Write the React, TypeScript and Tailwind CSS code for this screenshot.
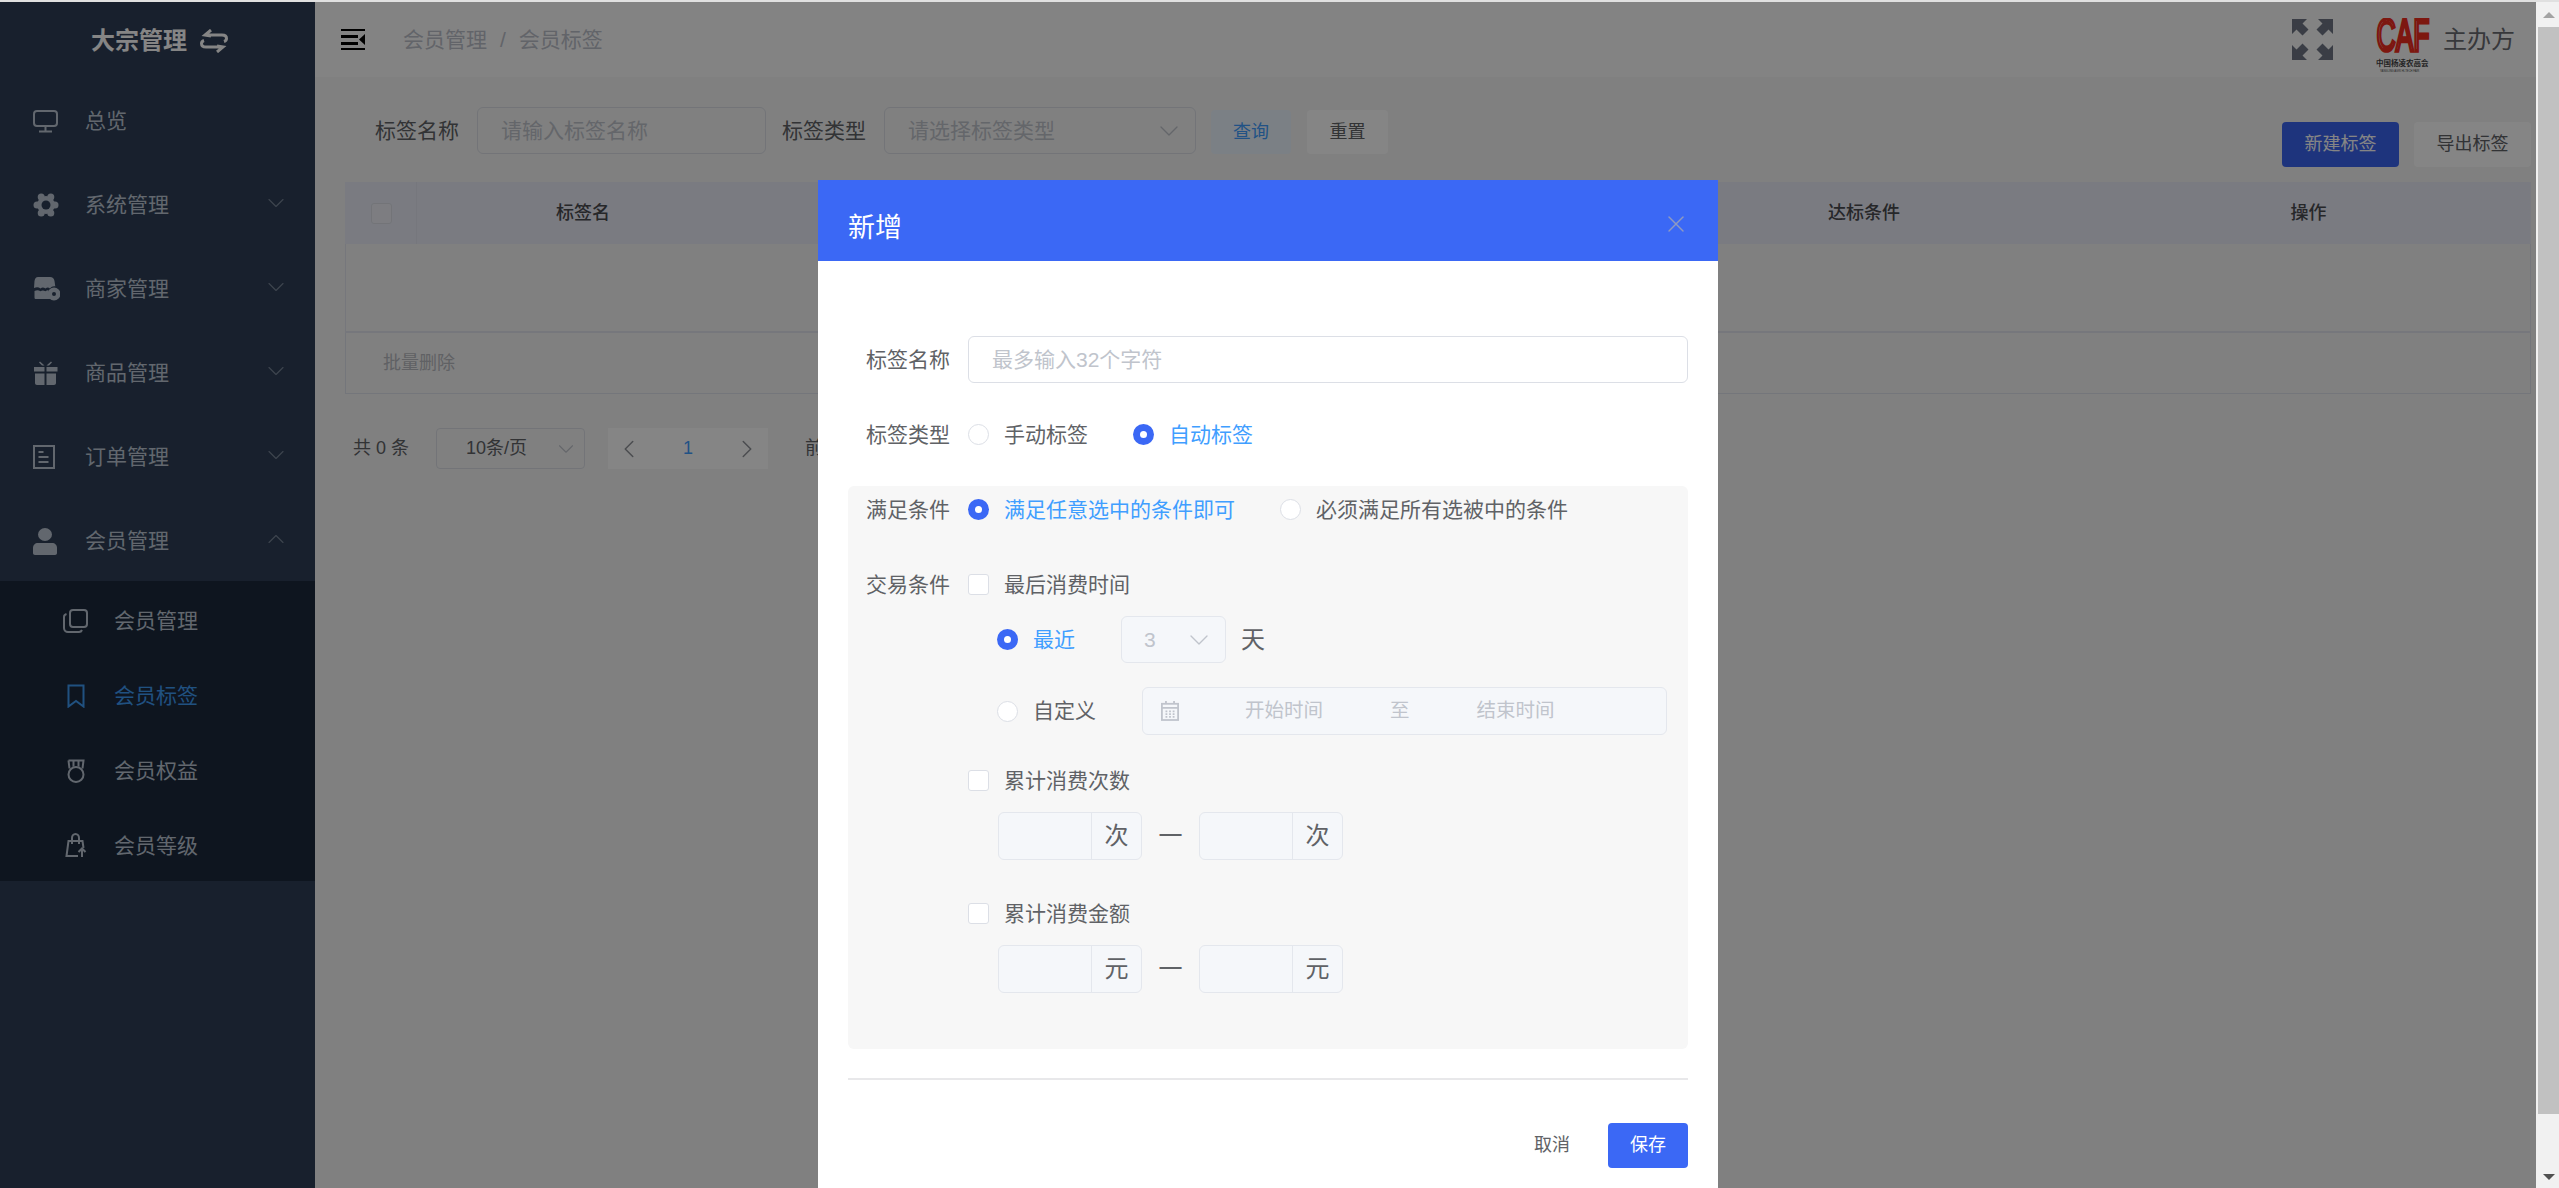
import { ReactNode } from 'react'
import { ChevronDown, ChevronUp, ChevronLeft, ChevronRight, X } from 'lucide-react'

const SIDEBAR_BG = '#2e3e56'

const MonitorIcon = () => (
  <svg width="25" height="24" viewBox="0 0 25 24" fill="none" stroke="currentColor" strokeWidth="2">
    <rect x="1" y="2" width="23" height="15" rx="3" />
    <path d="M12.500 17v5M6 22.500h13" />
  </svg>
)

const GearIcon = () => (
  <svg width="26" height="24" viewBox="0 0 26 24" fill="currentColor">
    <circle cx="13" cy="12" r="9" />
    <circle cx="22" cy="12" r="3.500" />
    <circle cx="4" cy="12" r="3.500" />
    <circle cx="17.800" cy="4" r="3.500" />
    <circle cx="8.200" cy="4" r="3.500" />
    <circle cx="17.800" cy="20" r="3.500" />
    <circle cx="8.200" cy="20" r="3.500" />
    <circle cx="13" cy="12" r="4.500" fill={SIDEBAR_BG} />
  </svg>
)

const ShopIcon = () => (
  <svg width="27" height="24" viewBox="0 0 27 24" fill="currentColor">
    <path d="M5 0h12c2.500 0 4 1.500 4.500 4l.8 5.500c-2-.5-3.800.2-5.300 2-1.500-1.500-3-1.500-4.500 0-2-1.500-3.500-1.500-5 0-2-1.500-4-1.500-6.500-.5L1.500 4C2 1.500 3 0 5 0z" />
    <path d="M1.500 14c2-1 4-1 6 .2 1.500-1 3-1 5 0 1-.8 2-1 3-.8-.7 3 .2 6.600 2 8.600H3c-1 0-1.500-.5-1.500-1.500z" />
    <path fillRule="evenodd" d="M21 10.500a6.500 6.500 0 1 1 0 13 6.500 6.500 0 0 1 0-13zm0 4.500a2 2 0 1 0 0 4 2 2 0 0 0 0-4z" />
  </svg>
)

const GiftIcon = () => (
  <svg width="25" height="24" viewBox="0 0 25 24" fill="currentColor">
    <path d="M1 6h10.500v4.500H1zM13.500 6H24.500v4.500H13.500zM2 12.500h9.500V24H4c-1.200 0-2-.8-2-2zM13.500 12.500H23V22c0 1.200-.8 2-2 2h-7.500z" />
    <path d="M7 .5l4.500 4h-2.500L6 1.500zM18 .5l-4.500 4H16l3-3z" />
  </svg>
)

const DocIcon = () => (
  <svg width="22" height="24" viewBox="0 0 22 24" fill="none" stroke="currentColor" strokeWidth="2">
    <rect x="1" y="1" width="20" height="22" />
    <path d="M5.500 7h5M5.500 12h10M5.500 17h10" />
  </svg>
)

const UserIcon = () => (
  <svg width="24" height="27" viewBox="0 0 24 27" fill="currentColor">
    <ellipse cx="12" cy="6.500" rx="7" ry="6.500" />
    <path d="M5 15h14c3 0 5 2 5 5v5c0 1-.8 2-2 2H2c-1.200 0-2-1-2-2v-5c0-3 2-5 5-5z" />
  </svg>
)

const CopyIcon = () => (
  <svg width="25" height="24" viewBox="0 0 25 24" fill="none" stroke="currentColor" strokeWidth="2">
    <rect x="7" y="1" width="17" height="17" rx="3" />
    <path d="M3.500 5C2 5.500 1 6.500 1 8v11c0 2.500 2 4 4 4h11c1.500 0 2.500-.8 3-2" />
  </svg>
)

const BookmarkIcon = () => (
  <svg width="18" height="24" viewBox="0 0 18 24" fill="none" stroke="currentColor" strokeWidth="2">
    <path d="M1.500 1.500h15v21L9 17l-7.500 5.500z" />
  </svg>
)

const MedalIcon = () => (
  <svg width="18" height="24" viewBox="0 0 18 24" fill="none" stroke="currentColor" strokeWidth="2">
    <path d="M1.500 1.500h15l-1 8M1.500 1.500l1 8M6.500 1.500v6M11.500 1.500v6" />
    <circle cx="9" cy="15.500" r="7.500" />
  </svg>
)

const BagIcon = () => (
  <svg width="22" height="25" viewBox="0 0 22 25" fill="none" stroke="currentColor" strokeWidth="2">
    <path d="M13 23H1.500L3.500 8h14l1 7" />
    <path d="M7 11V5c0-2.200 1.500-4 3.500-4S14 2.800 14 5v6" />
    <path d="M17 24v-8M13.500 19l3.500-3.500 3.500 3.500" />
  </svg>
)

const FullscreenIcon = () => (
  <svg width="41" height="41" viewBox="0 0 41 41" fill="currentColor">
    <path d="M0 0h15l-4.500 4.500 6 6-6 6-6-6L0 15z" />
    <path d="M41 0H26l4.500 4.500-6 6 6 6 6-6L41 15z" />
    <path d="M0 41h15l-4.500-4.500 6-6-6-6-6 6L0 26z" />
    <path d="M41 41H26l4.500-4.500-6-6 6-6 6 6L41 26z" />
  </svg>
)

const Radio = ({ checked, label }: { checked?: boolean; label: string }) => (
  <span className="flex items-center">
    {checked ? (
      <span className="flex h-[21px] w-[21px] items-center justify-center rounded-full bg-[#3b68f5]">
        <span className="h-[7px] w-[7px] rounded-full bg-white" />
      </span>
    ) : (
      <span className="h-[21px] w-[21px] rounded-full border border-[#dcdfe6] bg-white" />
    )}
    <span className={`ml-[15px] ${checked ? 'text-[#409eff]' : ''}`}>{label}</span>
  </span>
)

const Check = ({ label }: { label: string }) => (
  <div className="flex h-[47px] items-center">
    <span className="h-[21px] w-[21px] rounded-[3px] border border-[#dcdfe6] bg-white" />
    <span className="ml-[15px]">{label}</span>
  </div>
)

const Field = ({ label, children, className = '' }: { label: string; children: ReactNode; className?: string }) => (
  <div className={`flex ${className}`}>
    <div className="h-[47px] w-[102px] shrink-0 text-right leading-[47px]">{label}</div>
    <div className="ml-[18px] min-w-0 flex-1">{children}</div>
  </div>
)

const UnitInput = ({ unit }: { unit: string }) => (
  <div className="flex h-[48px] w-[144px] rounded-[6px] border border-[#e4e7ed] bg-[#f5f7fa]">
    <div className="flex-1 border-r border-[#e4e7ed]" />
    <div className="flex w-[49px] items-center justify-center text-[24px]">{unit}</div>
  </div>
)

const Range = ({ unit }: { unit: string }) => (
  <div className="ml-[30px] mt-[8px] flex items-center">
    <UnitInput unit={unit} />
    <span className="w-[57px] text-center text-[24px]">一</span>
    <UnitInput unit={unit} />
  </div>
)

const menus = [
  { label: '总览', icon: <MonitorIcon /> },
  { label: '系统管理', icon: <GearIcon />, arrow: 'down' },
  { label: '商家管理', icon: <ShopIcon />, arrow: 'down' },
  { label: '商品管理', icon: <GiftIcon />, arrow: 'down' },
  { label: '订单管理', icon: <DocIcon />, arrow: 'down' },
  { label: '会员管理', icon: <UserIcon />, arrow: 'up' },
]

const subMenus = [
  { label: '会员管理', icon: <CopyIcon /> },
  { label: '会员标签', icon: <BookmarkIcon />, active: true },
  { label: '会员权益', icon: <MedalIcon /> },
  { label: '会员等级', icon: <BagIcon /> },
]

const Sidebar = () => (
  <aside className="flex h-full w-[315px] shrink-0 flex-col bg-[#2e3e56] text-[21px] text-[#bcc6d4]">
    <div className="flex h-[77px] shrink-0 items-center pl-[91px] text-white">
      <span className="text-[24px] font-bold">大宗管理</span>
      <svg className="ml-[13px]" width="28" height="24" viewBox="0 0 28 24" fill="none" stroke="currentColor" strokeWidth="3">
        <path d="M11 1L5 6l6 1M5 6h17c3 0 4.500 1.500 4.500 3.500 0 1.500-1 2.500-2.500 3" />
        <path d="M17 23l6-5-6-1M23 18H6c-3 0-4.500-1.500-4.500-3.500 0-1.500 1-2.500 2.500-3" />
      </svg>
    </div>
    {menus.map((m) => (
      <div key={m.label} className="flex h-[84px] shrink-0 items-center">
        <span className="flex w-[85px] pl-[33px]">{m.icon}</span>
        <span>{m.label}</span>
        {m.arrow === 'down' && <ChevronDown className="ml-auto mr-[25px] mb-[4px] opacity-50" size={28} strokeWidth={1} />}
        {m.arrow === 'up' && <ChevronUp className="ml-auto mr-[25px] mb-[4px] opacity-50" size={28} strokeWidth={1} />}
      </div>
    ))}
    <div className="-mt-[2px] h-[300px] shrink-0 bg-[#1c2a3c] pt-[2px]">
      {subMenus.map((m) => (
        <div key={m.label} className={`flex h-[75px] items-center ${m.active ? 'text-[#3f9bf5]' : ''}`}>
          <span className="flex w-[114px] pl-[63px]">
            <span className="flex w-[25px] justify-center">{m.icon}</span>
          </span>
          <span>{m.label}</span>
        </div>
      ))}
    </div>
  </aside>
)

const Header = () => (
  <header className="flex h-[75px] shrink-0 items-center bg-[#fbfbfb] pl-[26px] pr-[21px]">
    <svg width="24" height="21" viewBox="0 0 24 21" fill="#000">
      <rect width="24" height="2" y="0" />
      <rect width="17" height="3" y="6" />
      <rect width="17" height="3" y="13" />
      <rect width="24" height="2" y="19" />
      <path d="M24 5v11l-6-5.500z" />
    </svg>
    <span className="ml-[38px] text-[21px] text-[#bcc0ca]">会员管理</span>
    <span className="mx-[13px] text-[21px] text-[#bcc0ca]">/</span>
    <span className="text-[21px] text-[#bcc0ca]">会员标签</span>
    <span className="ml-auto text-[#6f7684]">
      <FullscreenIcon />
    </span>
    {/* logo: letters squeezed with a transform so the text box stays inside the svg */}
    <svg className="ml-[42px] mt-[13px]" width="56" height="56" viewBox="0 0 56 56">
      <text transform="translate(1.500 33) scale(.565 1)" fontSize="47" fill="#ffffff" stroke="#f02c20" strokeWidth="3" vectorEffect="non-scaling-stroke" fontFamily="'Liberation Sans', sans-serif">CAF</text>
      <text transform="translate(1 48)" fontSize="7.500" fontWeight="700" fill="#444">中国杨凌农高会</text>
      <text transform="translate(5 54) scale(.9 1)" fontSize="3" fill="#444">YANGLING AGRI HI-TECH FAIR</text>
    </svg>
    <span className="ml-[12px] text-[24px] text-[#6a6c72]">主办方</span>
  </header>
)

const Select = ({ placeholder, className }: { placeholder: string; className: string }) => (
  <div className={`flex h-[47px] items-center rounded-[6px] border border-[#dcdfe6] pl-[23px] pr-[10px] ${className}`}>
    <span className="text-[#c0c4cc]">{placeholder}</span>
    <ChevronDown className="ml-auto text-[#c0c4cc]" size={32} strokeWidth={1} />
  </div>
)

const Toolbar = () => (
  <div className="flex h-[105px] shrink-0 pl-[60px] pt-[30px] text-[21px]">
    <span className="leading-[47px] text-[#606266]">标签名称</span>
    <input
      className="ml-[18px] h-[47px] w-[289px] rounded-[6px] border border-[#dcdfe6] pl-[23px] outline-none placeholder:text-[#c0c4cc]"
      placeholder="请输入标签名称"
    />
    <span className="ml-[16px] leading-[47px] text-[#606266]">标签类型</span>
    <Select placeholder="请选择标签类型" className="ml-[18px] w-[312px]" />
    <button className="ml-[15px] mt-[3px] h-[44px] w-[80px] rounded-[4px] bg-[#ecf5ff] text-[18px] text-[#409eff]">查询</button>
    <button className="ml-[16px] mt-[3px] h-[44px] w-[81px] rounded-[4px] bg-white text-[18px] text-[#606266]">重置</button>
    <button className="ml-auto mt-[15px] h-[45px] w-[117px] rounded-[4px] bg-[#3b65f0] text-[18px] text-white">新建标签</button>
    <button className="ml-[15px] mt-[15px] h-[45px] w-[117px] rounded-[4px] bg-white text-[18px] text-[#606266]">导出标签</button>
  </div>
)

const Table = () => (
  <div className="text-[18px]">
    <div className="flex h-[62px] items-center bg-[#eaecf7] font-medium text-[#4a4b50]">
      <div className="flex h-full w-[72px] items-center border-r border-[#e2e4f0] pl-[26px]">
        <span className="h-[21px] w-[21px] rounded-[3px] border border-[#dcdfe6] bg-[#eff0f8]" />
      </div>
      <div className="w-[332px] text-center">标签名</div>
      <div className="flex-1" />
      <div className="w-[444px] text-center">达标条件</div>
      <div className="w-[445px] text-center">操作</div>
    </div>
    <div className="h-[89px] border-x border-b-2 border-[#e2e4ee]" />
    <div className="flex h-[61px] items-center border-x border-b border-[#dfe3ec] pl-[37px] text-[#b8bac0]">批量删除</div>
  </div>
)

const Pagination = () => (
  <div className="mt-[34px] flex h-[41px] items-center pl-[8px] text-[18px] text-[#606266]">
    <span className="w-[83px]">共 0 条</span>
    <div className="flex h-[41px] w-[149px] items-center rounded-[4px] border border-[#dcdfe6] pl-[29px] pr-[5px]">
      <span>10条/页</span>
      <ChevronDown className="ml-auto text-[#c0c4cc]" size={26} strokeWidth={1} />
    </div>
    <div className="ml-[23px] flex h-[41px] w-[160px] items-center justify-between bg-white px-[6px] text-[#909399]">
      <ChevronLeft size={30} strokeWidth={1.2} />
      <span className="text-[#409eff]">1</span>
      <ChevronRight size={30} strokeWidth={1.2} />
    </div>
    <span className="ml-[37px]">前往</span>
  </div>
)

const Modal = () => (
  <div className="absolute left-[818px] top-[178px] h-[1010px] w-[900px] bg-white text-[21px] text-[#606266]">
    <div className="flex h-[81px] items-center justify-between bg-[#3b68f5] pl-[30px] pr-[28px]">
      <span className="mt-[16px] text-[27px] text-white">新增</span>
      <X className="mt-[6px] text-[#8f9ac0]" size={28} strokeWidth={1.2} />
    </div>
    <div className="px-[30px] pt-[75px]">
      <Field label="标签名称">
        <input
          className="h-[47px] w-full rounded-[6px] border border-[#dcdfe6] pl-[23px] outline-none placeholder:text-[#c0c4cc]"
          placeholder="最多输入32个字符"
        />
      </Field>
      <Field label="标签类型" className="mt-[28px]">
        <div className="flex h-[47px] items-center gap-[45px]">
          <Radio label="手动标签" />
          <Radio checked label="自动标签" />
        </div>
      </Field>
      <div className="mt-[28px] rounded-[6px] bg-[#f7f7f7] pb-[56px]">
        <Field label="满足条件">
          <div className="flex h-[47px] items-center gap-[45px]">
            <Radio checked label="满足任意选中的条件即可" />
            <Radio label="必须满足所有选被中的条件" />
          </div>
        </Field>
        <Field label="交易条件" className="mt-[28px]">
          <Check label="最后消费时间" />
          <div className="ml-[29px] mt-[8px] flex h-[47px] items-center">
            <div className="w-[124px]">
              <Radio checked label="最近" />
            </div>
            <div className="flex h-[47px] w-[105px] items-center rounded-[6px] border border-[#e4e7ed] bg-[#f5f7fa] pl-[22px] pr-[10px] text-[#c0c4cc]">
              <span>3</span>
              <ChevronDown className="ml-auto" size={32} strokeWidth={1} />
            </div>
            <span className="ml-[15px] text-[24px]">天</span>
          </div>
          <div className="ml-[29px] mt-[24px] flex h-[48px] items-center">
            <div className="w-[145px]">
              <Radio label="自定义" />
            </div>
            <div className="flex h-[48px] w-[525px] items-center rounded-[6px] border border-[#e4e7ed] bg-[#f5f7fa] text-[19.500px] text-[#c0c4cc]">
              <svg className="ml-[18px]" width="18" height="20" viewBox="0 0 20 22" fill="none" stroke="currentColor" strokeWidth="2">
                <rect x="1" y="3" width="18" height="18" />
                <path d="M1 7.500h18M5.500 0v3M14.500 0v3" />
                <path d="M5 11.500h10M5 14.500h10M5 17.500h10" strokeDasharray="2 2" />
              </svg>
              <span className="ml-[66px]">开始时间</span>
              <span className="ml-[67px]">至</span>
              <span className="ml-[67px]">结束时间</span>
            </div>
          </div>
          <div className="mt-[22px]">
            <Check label="累计消费次数" />
          </div>
          <Range unit="次" />
          <div className="mt-[30px]">
            <Check label="累计消费金额" />
          </div>
          <Range unit="元" />
        </Field>
      </div>
      <div className="mt-[29px] h-[2px] bg-[#e8e8ea]" />
      <div className="mt-[43px] flex items-center justify-end text-[18px]">
        <span className="text-[#606266]">取消</span>
        <button className="ml-[38px] h-[45px] w-[80px] rounded-[4px] bg-[#3b68f5] text-white">保存</button>
      </div>
    </div>
  </div>
)

export default function App() {
  return (
    <div
      className="flex h-[1188px] w-[2559px] flex-col overflow-hidden bg-white"
      style={{ fontFamily: '"Liberation Sans", "Noto Sans CJK SC", sans-serif' }}
    >
      <div className="h-[2px] shrink-0 bg-[#e0e0e0]" />
      <div className="flex min-h-0 flex-1">
        <div className="relative flex min-w-0 flex-1">
          <Sidebar />
          <main className="flex min-w-0 flex-1 flex-col bg-[#f6f6f6]">
            <Header />
            <div className="pr-[5px]">
              <Toolbar />
              <div className="pl-[30px]">
                <Table />
                <Pagination />
              </div>
            </div>
          </main>
          <div className="absolute inset-0 bg-black/[.48]" />
          <Modal />
        </div>
        <div className="flex w-[23px] shrink-0 flex-col bg-[#f1f1f1]">
          <div className="flex h-[25px] items-center justify-center pl-[2px]">
            <span className="h-0 w-0 border-x-[6px] border-b-[6px] border-x-transparent border-b-[#a3a3a3]" />
          </div>
          <div className="ml-[2px] flex-1 bg-[#c1c1c1]" />
          <div className="flex h-[74px] items-end justify-center pb-[8px] pl-[2px]">
            <span className="h-0 w-0 border-x-[6px] border-t-[6px] border-x-transparent border-t-[#505050]" />
          </div>
        </div>
      </div>
    </div>
  )
}
